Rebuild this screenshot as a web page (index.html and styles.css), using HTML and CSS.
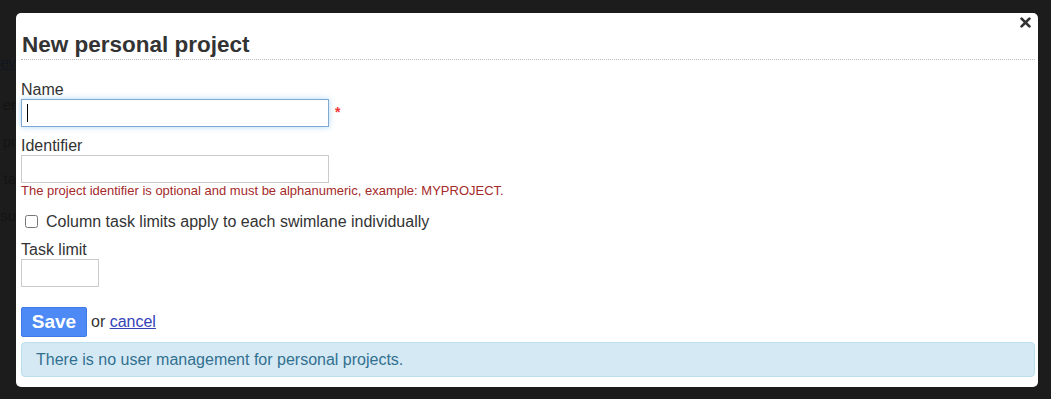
FILE: index.html
```html
<!DOCTYPE html>
<html>
<head>
<meta charset="utf-8">
<link rel="stylesheet" href="styles.css">
</head>
<body>
<div class="page">
  <div class="bg-link">ev</div>
  <div class="bg-line">er</div>
  <div class="bg-line">pr</div>
  <div class="bg-line">ta</div>
  <div class="bg-line">su</div>
</div>
<div class="overlay">
  <div class="modal">
    <div class="modal-top">
      <a class="close" href="#"><svg width="11" height="11" viewBox="0 0 11 11"><path d="M1.6 1.6 L9.4 9.4 M9.4 1.6 L1.6 9.4" stroke="#333" stroke-width="2.7" stroke-linecap="round"/></svg></a>
    </div>
    <div class="page-header"><h2>New personal project</h2></div>
    <form class="form">
      <label class="lbl">Name</label>
      <div class="row">
        <span class="field">
          <input class="input focus" type="text">
          <span class="caret"></span>
        </span>
        <span class="required">*</span>
      </div>
      <label class="lbl">Identifier</label>
      <input class="input tight" type="text">
      <p class="form-help">The project identifier is optional and must be alphanumeric, example: MYPROJECT.</p>
      <label class="check"><input type="checkbox"> Column task limits apply to each swimlane individually</label>
      <label class="lbl">Task limit</label>
      <input class="input small" type="text">
      <div class="actions">
        <button class="btn" type="button">Save</button>
        <span class="or">or <a href="#">cancel</a></span>
      </div>
      <div class="alert">There is no user management for personal projects.</div>
    </form>
  </div>
</div>
</body>
</html>
```
FILE: styles.css
```css
* { box-sizing: border-box; }
html, body { margin: 0; padding: 0; }
body {
  width: 1051px;
  height: 399px;
  overflow: hidden;
  background: #1c1c1c;
  font-family: "Liberation Sans", Arial, Helvetica, sans-serif;
  color: #333;
}
.page {
  width: 16px;
  padding: 54px 0 0;
  color: #101010;
  font-size: 15px;
  white-space: nowrap;
  text-align: right;
}
.bg-link { text-decoration: underline; color: #111621; height: 42px; }
.bg-line { height: 37px; color: #141414; }
.overlay {
  position: fixed;
  inset: 0;
}
.modal {
  position: absolute;
  left: 16px;
  top: 13px;
  width: 1022px;
  height: 374px;
  background: #fff;
  border-radius: 5px;
  padding: 0 3px 0 5px;
}
.modal-top {
  display: flex;
  justify-content: flex-end;
  height: 19px;
  padding-top: 4px;
  padding-right: 4px;
}
.close { display: block; width: 11px; height: 11px; line-height: 0; }
.page-header {
  border-bottom: 1px dotted #bbb;
  padding-bottom: 1px;
}
.page-header h2 {
  margin: 0;
  font-size: 22.5px;
  font-weight: bold;
  color: #333;
  line-height: 26px;
  padding-left: 1px;
}
.form { padding-top: 20px; }
.lbl {
  display: block;
  font-size: 16px;
  line-height: 19px;
  color: #333;
}
.row { display: flex; align-items: center; margin-bottom: 9px; }
.field { position: relative; display: block; }
.caret {
  position: absolute;
  left: 6px;
  top: 5px;
  width: 1px;
  height: 18px;
  background: #000;
}
.input {
  display: block;
  width: 308px;
  height: 28px;
  border: 1px solid #ccc;
  border-radius: 0;
  background: #fff;
  margin: 0;
  padding: 0 6px;
  font-size: 16px;
}
.input.focus {
  border-color: #7fa8d3;
  box-shadow: 0 0 6px rgba(82, 168, 236, 0.45);
  outline: none;
}
.required { color: #e33; font-size: 14px; font-weight: bold; margin-left: 6px; margin-top: -2px; }
.input.small { width: 78px; }
.form-help {
  margin: 0;
  font-size: 13px;
  line-height: 15px;
  color: #a52a2a;
}
.check {
  display: flex;
  align-items: center;
  margin-top: 14px;
  margin-bottom: 9px;
  font-size: 16px;
  line-height: 19px;
}
.check input {
  width: 13px;
  height: 13px;
  margin: 0 8px 0 4px;
}
.actions {
  display: flex;
  align-items: center;
  margin-top: 20px;
  font-size: 16px;
}
.btn {
  width: 66px;
  height: 30px;
  background: #4d8af5;
  border: 1px solid #3f7ae6;
  border-radius: 2px;
  color: #fff;
  font-family: "Liberation Sans", Arial, sans-serif;
  font-size: 19px;
  font-weight: bold;
  padding: 0;
}
.or { margin-left: 4px; color: #333; }
.or a { color: #3342b8; text-decoration: underline; }
.alert {
  margin-top: 5px;
  height: 35px;
  background: #d5e9f5;
  border: 1px solid #bcdfee;
  border-radius: 4px;
  color: #31708f;
  font-size: 16px;
  line-height: 33px;
  padding-left: 14px;
}
```
